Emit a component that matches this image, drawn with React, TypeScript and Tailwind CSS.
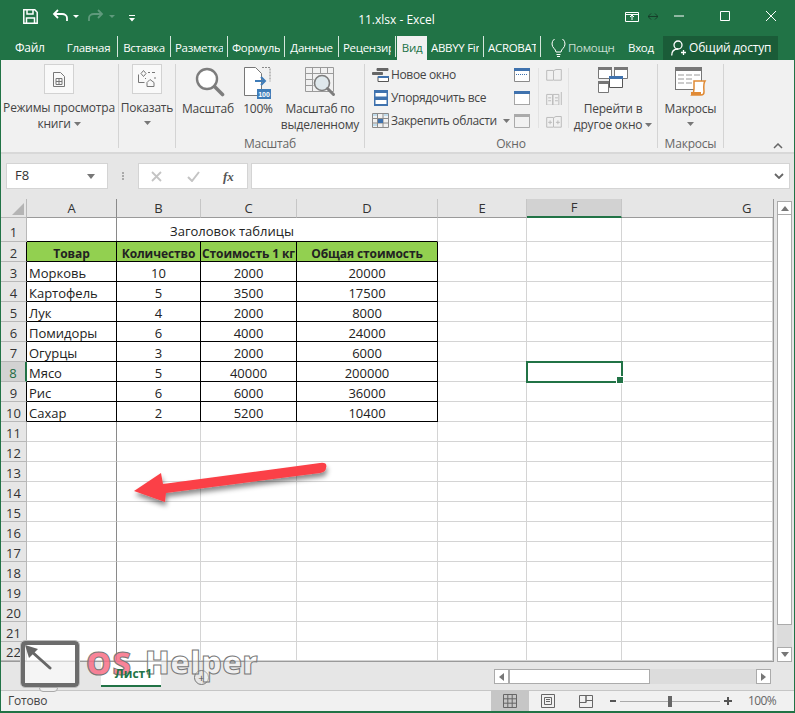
import type { ReactNode } from 'react'

const UI_FONT = "font-['Open_Sans','Noto_Sans',sans-serif]"

const COLS = ['A', 'B', 'C', 'D', 'E', 'F', 'G']
const ROWS: [string, string, string, string][] = [
  ['Морковь', '10', '2000', '20000'],
  ['Картофель', '5', '3500', '17500'],
  ['Лук', '4', '2000', '8000'],
  ['Помидоры', '6', '4000', '24000'],
  ['Огурцы', '3', '2000', '6000'],
  ['Мясо', '5', '40000', '200000'],
  ['Рис', '6', '6000', '36000'],
  ['Сахар', '2', '5200', '10400'],
]

function Tab({ label, w }: { label: string; w: string }) {
  return (
    <div className={`${w} h-[21px] px-1 border-r border-[#d5e6dc]`}>
      <div className="overflow-hidden whitespace-nowrap text-center leading-[24px]">{label}</div>
    </div>
  )
}

function Caret({ className = '' }: { className?: string }) {
  return (
    <svg width="7" height="4" viewBox="0 0 7 4" className={`inline-block ${className}`}>
      <path d="M0 0h7L3.500 4z" fill="#777" />
    </svg>
  )
}

function BigLabel({ children, className = '' }: { children: ReactNode; className?: string }) {
  return <div className={`text-center text-[12px] leading-[16px] tracking-[-0.2px] text-[#444] ${className}`}>{children}</div>
}

function GroupTitle({ children }: { children: ReactNode }) {
  return <div className="absolute -bottom-1 left-0 right-0 text-center text-[12px] leading-[16px] tracking-[-0.2px] text-[#666]">{children}</div>
}

function ViewBox({ children }: { children: ReactNode }) {
  return <div className="w-[30px] h-[30px] bg-[#f9f9f9] border border-[#d2d2d2] flex items-center justify-center">{children}</div>
}

function WindowRow({ icon, label, caret }: { icon: ReactNode; label: string; caret?: boolean }) {
  return (
    <div className="flex items-center h-[23px] text-[12px] tracking-[-0.35px] whitespace-nowrap text-[#444]">
      <span className="w-[17px] flex justify-center">{icon}</span>
      <span className="ml-0.5">{label}</span>
      {caret && <Caret className="ml-1.5" />}
    </div>
  )
}

function Ribbon() {
  return (
    <div className="h-[94px] bg-[#f1f1f1] flex border-b-2 border-[#d8d8d8] relative">
      <div className="w-[118px] h-[84px] mt-1 pr-px border-r border-[#d4d4d4] flex flex-col items-center">
        <ViewBox>
          <svg width="12" height="15" viewBox="0 0 12 15" fill="none" stroke="#777">
            <path d="M.5.5h7l4 4v10H.5z" />
            <path d="M3 6.500h6v6H3zM6 6.500v6M3 9.500h6" />
          </svg>
        </ViewBox>
        <BigLabel className="mt-[6px] whitespace-nowrap">Режимы просмотра</BigLabel>
        <BigLabel>книги <Caret className="mb-0.5" /></BigLabel>
      </div>
      <div className="w-[57px] h-[84px] mt-1 border-r border-[#d4d4d4] flex flex-col items-center">
        <ViewBox>
          <svg width="18" height="18" viewBox="0 0 18 18" fill="none" stroke="#777">
            <path d="M.5 4.500v8h6M3 3.500 5.500.5 8 3.500 5.500 6.500zM10 2.500h2M14 2.500h3M12 9.500l-3 3v4h7v-4z" />
            <path d="M7 8.500h1M17 7v2" />
          </svg>
        </ViewBox>
        <BigLabel className="mt-[6px]">Показать</BigLabel>
        <Caret className="mt-[5px]" />
      </div>
      <div className="w-[189px] h-[84px] mt-1 border-r border-[#d4d4d4] relative flex">
        <div className="w-[64px] flex flex-col items-center">
          <svg width="30" height="30" viewBox="0 0 30 30" fill="none" className="mt-[3px] ml-1">
            <circle cx="12" cy="12" r="10" stroke="#7d7d7d" strokeWidth="2.400" fill="#fff" />
            <path d="m19.500 19.500 8 8" stroke="#7d7d7d" strokeWidth="3.600" strokeLinecap="round" />
          </svg>
          <BigLabel className="mt-[4px]">Масштаб</BigLabel>
        </div>
        <div className="w-[36px] flex flex-col items-center">
          <svg width="28" height="32" viewBox="0 0 28 32" fill="none" className="mt-[3px] shrink-0">
            <path d="M.5.5h11l6 6v22H.5z" fill="#fff" stroke="#777" />
            <path d="M18 .5h8v14" stroke="#888" strokeDasharray="2 1" />
            <path d="M11 14h10M17 10l4 4-4 4" stroke="#3f7cb8" strokeWidth="2" />
            <rect x="13" y="22" width="14" height="10" fill="#3f7cb8" />
            <text x="20" y="30" textAnchor="middle" fontSize="7" fill="#fff" fontFamily="Liberation Sans" fontWeight="700">100</text>
          </svg>
          <BigLabel className="mt-[2px]">100%</BigLabel>
        </div>
        <div className="flex-1 flex flex-col items-center">
          <svg width="31" height="30" viewBox="0 0 31 30" fill="none" className="mt-[3px]" stroke="#9a9a9a">
            <path d="M.5.500h28v24H.5zM.5 6.500h28M.5 12.500h8M.5 18.500h8M7.500.5v24M15.500.5v6M22.500.5v6" />
            <circle cx="17" cy="16" r="7.500" fill="#dfe8ec" stroke="#7d7d7d" strokeWidth="1.600" />
            <path d="m22.500 21.500 6 6" stroke="#7d7d7d" strokeWidth="3" strokeLinecap="round" />
          </svg>
          <BigLabel className="mt-[4px]">Масштаб по</BigLabel>
          <BigLabel>выделенному</BigLabel>
        </div>
        <GroupTitle>Масштаб</GroupTitle>
      </div>
      <div className="w-[293px] h-[84px] mt-1 border-r border-[#d4d4d4] relative flex">
        <div className="w-[149px] pl-[7px] -mt-px">
          <WindowRow
            label="Новое окно"
            icon={
              <svg width="17" height="14" viewBox="0 0 17 14" fill="none">
                <path d="M5 .5h11v2H5z" fill="#666" stroke="#666" />
                <path d="M.5 4.500h10v2H.5z" fill="#666" stroke="#666" />
                <path d="M6 8.500h10.500v5H6z" fill="#fff" stroke="#555" />
                <path d="M6 8h11v2H6z" fill="#3f72ae" />
              </svg>
            }
          />
          <WindowRow
            label="Упорядочить все"
            icon={
              <svg width="14" height="16" viewBox="0 0 14 16" fill="none">
                <rect x="0" y="0" width="14" height="16" fill="#3f72ae" />
                <rect x="1.500" y="3" width="11" height="3.500" fill="#fff" />
                <rect x="1.500" y="10" width="11" height="4" fill="#fff" />
              </svg>
            }
          />
          <WindowRow
            label="Закрепить области"
            caret
            icon={
              <svg width="17" height="15" viewBox="0 0 17 15" fill="none" stroke="#8a8a8a">
                <path d="M.5.5h16v14H.5zM.5 5.500h16M.5 10h16M5.500.5v14M11 .5v14" />
                <rect x="6" y="6" width="5" height="4" fill="#3f72ae" stroke="none" />
                <path d="M1 2h4M12 2h4M1 12h4" stroke="#8cc4e4" />
              </svg>
            }
          />
        </div>
        <div className="w-[16px] mr-[8px] flex flex-col">
          <svg width="16" height="14" viewBox="0 0 16 14" className="mt-[4px]" fill="#fff" stroke="#8a8a8a">
            <path d="M.5.5h15v13H.5z" />
            <path d="M0 0h16v3H0z" fill="#3f72ae" stroke="none" />
            <path d="M2 6.500h12" strokeDasharray="1 1" stroke="#3f72ae" />
          </svg>
          <svg width="16" height="14" viewBox="0 0 16 14" className="mt-[9px]" fill="#fff" stroke="#555" strokeDasharray="1 1">
            <path d="M.5.5h15v13H.5z" />
            <path d="M0 0h16v3H0z" fill="#3f72ae" stroke="none" />
          </svg>
          <svg width="16" height="14" viewBox="0 0 16 14" className="mt-[9px]" fill="none" stroke="#aaa">
            <path d="M.5.5h15v13H.5z" />
            <path d="M0 0h16v3H0z" fill="#aaa" stroke="none" />
          </svg>
        </div>
        <div className="w-[31px] h-[60px] mt-1 border-x border-[#e2e2e2] flex flex-col items-center gap-[11px] pt-px">
          <svg width="16" height="12" viewBox="0 0 16 12" fill="none" stroke="#bbb">
            <path d="M.5 1.500h7v10h-7zM8 1.500l2-1h5.500v11H8" />
          </svg>
          <svg width="16" height="14" viewBox="0 0 16 14" fill="none" stroke="#bbb">
            <path d="M.5 2.500h6v11h-6zM7 2.500h6v11H7zM15.500 0v14M2 6h3M2 9h3M9 6h3M9 9h3" />
          </svg>
          <svg width="16" height="12" viewBox="0 0 16 12" fill="none" stroke="#bbb">
            <path d="M.5 1.500h7v10h-7zM8 1.500l2-1h5.500v11H8M2 6.500h4M4 4.500v4M10 6.500h4M12 4.500v4" />
          </svg>
        </div>
        <div className="flex-1 flex flex-col items-center">
          <svg width="30" height="26" viewBox="0 0 30 26" className="mt-[3px]" fill="#fff" stroke="#777">
            <path d="M.5.500h13v11H.5zM16.500.5h13v11h-13zM.5 14.500h10v11H.5z" />
            <path d="M0 0h14v3H0zM16 0h14v3H16zM0 14h11v3H0z" fill="#777" stroke="none" />
            <path d="M11.500 9.500h13v11h-13z" stroke="#555" />
            <path d="M11 9h14v3H11z" fill="#3f72ae" stroke="none" />
          </svg>
          <BigLabel className="mt-[8px]">Перейти в</BigLabel>
          <BigLabel className="whitespace-nowrap">другое окно <Caret className="mb-0.5" /></BigLabel>
        </div>
        <GroupTitle>Окно</GroupTitle>
      </div>
      <div className="w-[66px] h-[84px] mt-1 border-r border-[#d4d4d4] relative flex flex-col items-center">
        <svg width="32" height="30" viewBox="0 0 32 30" className="mt-[3px]" fill="none">
          <rect x=".5" y=".5" width="26" height="22" fill="#fff" stroke="#777" />
          <rect x="0" y="0" width="27" height="4" fill="#777" />
          <path d="M3 8h6M11 8h6M19 8h6M3 12h6M11 12h6M3 16h6M11 16h6" stroke="#999" />
          <path d="M19 14h11c-2 3-1 8-1 11 0 2-1 3-3 3h-9c2-2 2-4 2-6z" fill="#fff" stroke="#e08a35" strokeWidth="1.500" />
          <path d="M16 25h10v3H16z" fill="#e08a35" />
        </svg>
        <BigLabel className="mt-[4px]">Макросы</BigLabel>
        <Caret className="mt-[5px]" />
        <GroupTitle>Макросы</GroupTitle>
      </div>
      <svg width="10" height="6" viewBox="0 0 10 6" fill="none" className="absolute right-[11px] bottom-[3px]">
        <path d="m1 5 4-4 4 4" stroke="#666" strokeWidth="1.500" />
      </svg>
    </div>
  )
}

function FormulaBar() {
  return (
    <div className="h-[45px] flex items-start pt-[9px] pl-[5px] pr-[4px]">
      <div className="w-[102px] h-[26px] bg-white border border-[#d4d4d4] flex items-center justify-between pl-2 pr-3 text-[13px] text-[#333]">
        F8
        <svg width="8" height="5" viewBox="0 0 8 5"><path d="M0 0h8L4 5z" fill="#777" /></svg>
      </div>
      <div className="w-[30px] h-[26px] flex flex-col items-center justify-center gap-px">
        <i className="w-[2px] h-[2px] bg-[#aaa]" />
        <i className="w-[2px] h-[2px] bg-[#aaa]" />
        <i className="w-[2px] h-[2px] bg-[#aaa]" />
      </div>
      <div className="w-[110px] h-[26px] bg-white border border-[#d4d4d4] flex items-center pl-[12px]">
        <svg width="11" height="11" viewBox="0 0 11 11"><path d="m1 1 9 9M10 1l-9 9" stroke="#c4c4c4" strokeWidth="1.800" /></svg>
        <svg width="13" height="11" viewBox="0 0 13 11" className="ml-[25px]"><path d="m1 6 4 4 7-9" stroke="#c4c4c4" strokeWidth="2" fill="none" /></svg>
        <span className="ml-[23px] font-['Liberation_Serif',serif] italic font-bold text-[13px] leading-none text-[#555]">fx</span>
      </div>
      <div className="w-[3px]" />
      <div className="flex-1 h-[26px] bg-white border border-[#d4d4d4] flex items-center justify-end pr-[5px]">
        <svg width="10" height="6" viewBox="0 0 10 6" fill="none"><path d="m1 1 4 4 4-4" stroke="#666" strokeWidth="1.800" /></svg>
      </div>
    </div>
  )
}

function Sheet() {
  const grid = 'border-r border-b border-[#d4d4d4] bg-white'
  const boxed = 'border-r border-b border-black'
  const emptyRows = Array.from({ length: 12 }, (_, i) => i + 11)
  const rowHead = (n: number) => {
    const inTable = n >= 2 && n <= 10
    return (
      <div
        key={`h${n}`}
        className={`flex items-center justify-center ${n === 1 ? 'pt-[5px]' : 'pt-[3px]'} text-[13px] border-b border-b-[#b8b8b8] ${n === 8 ? 'bg-[#d2d2d2] text-[#1d6b42] border-r-2 border-r-[#217346]' : `bg-[#e6e6e6] text-[#333] border-r ${inTable ? 'border-r-black' : 'border-r-[#b8b8b8]'}`}`}
      >
        {n}
      </div>
    )
  }
  return (
    <div className="flex-1 flex min-h-0">
      <div className="w-[773px] grid grid-cols-[26px_90px_84px_96px_141px_89px_95px_151px] grid-rows-[19px_24px_repeat(20,20px)_19px] border-b border-[#9a9a9a] border-r text-[13px] text-[#222] leading-none">
        <div className="bg-[#e6e6e6] border-r border-b border-[#b8b8b8] relative overflow-hidden">
          <i className="absolute right-[2px] bottom-[2px] w-0 h-0 border-l-[12px] border-l-transparent border-b-[12px] border-b-[#b4b4b4]" />
        </div>
        {COLS.map(c => (
          <div
            key={c}
            className={`flex items-center text-[#333] border-b ${c === 'G' ? 'pl-[120px] border-b-[#9a9a9a] bg-[#e6e6e6]' : 'justify-center border-r'} ${c === 'F' ? 'bg-[#d2d2d2] text-[#1d6b42] border-b-2 border-b-[#217346] border-r-[#c6c6c6]' : ''} ${c !== 'F' && c !== 'G' ? 'bg-[#e6e6e6] border-b-[#9a9a9a]' : ''} ${c === 'A' ? 'border-r-[#8a8a8a]' : 'border-r-[#c6c6c6]'}`}
          >
            {c}
          </div>
        ))}

        {rowHead(1)}
        <div className="col-span-4 relative bg-white flex items-center justify-center pt-[3px] border-b border-r border-b-black border-r-[#d4d4d4]">
          Заголовок таблицы
          <i className="absolute left-[89px] top-0 bottom-0 w-px bg-[#8a8a8a]" />
        </div>
        <div className={grid} />
        <div className={grid} />
        <div className={grid} />

        {rowHead(2)}
        {['Товар', 'Количество', 'Стоимость 1 кг', 'Общая стоимость'].map(t => (
          <div key={t} className={`bg-[#92d050] font-bold flex items-center justify-center pt-1 whitespace-nowrap overflow-hidden text-[12px] tracking-[-0.1px] ${boxed}`}>
            {t}
          </div>
        ))}
        <div className={grid} />
        <div className={grid} />
        <div className={grid} />

        {ROWS.map((r, i) => {
          const n = i + 3
          return [
            rowHead(n),
            <div key={`a${n}`} className={`${boxed} pt-[3px] bg-white flex items-center pl-0.5`}>{r[0]}</div>,
            <div key={`b${n}`} className={`${boxed} pt-[3px] bg-white flex items-center justify-center`}>{r[1]}</div>,
            <div key={`c${n}`} className={`${boxed} pt-[3px] bg-white flex items-center justify-center`}>{r[2]}</div>,
            <div key={`d${n}`} className={`${boxed} pt-[3px] bg-white flex items-center justify-center`}>{r[3]}</div>,
            <div key={`e${n}`} className={grid} />,
            <div key={`f${n}`} className={`${grid} relative`}>
              {n === 8 && (
                <div className="absolute -left-px -top-px w-[97px] h-[22px] border-2 border-[#217346] z-10">
                  <i className="absolute -right-[3px] -bottom-[3px] w-[6px] h-[6px] bg-[#217346] border border-white box-content" />
                </div>
              )}
            </div>,
            <div key={`g${n}`} className={grid} />,
          ]
        })}

        {emptyRows.map(n => [
          rowHead(n),
          <div key={`a${n}`} className="bg-white border-b border-b-[#d4d4d4] border-r border-r-[#8a8a8a]" />,
          ...['b', 'c', 'd', 'e', 'f', 'g'].map(k => <div key={`${k}${n}`} className={grid} />),
        ])}
      </div>
      <div className="w-[15px] ml-[3px] pt-[2px] flex flex-col">
        <div className="h-[14px] bg-white border border-[#ababab] flex items-center justify-center">
          <svg width="8" height="5" viewBox="0 0 8 5"><path d="M4 0l4 5H0z" fill="#777" /></svg>
        </div>
        <div className="h-[410px] bg-white border-x border-b border-[#ababab]" />
        <div className="flex-1 bg-[#dcdcdc]" />
        <div className="h-[15px] bg-white border border-[#ababab] flex items-center justify-center">
          <svg width="8" height="5" viewBox="0 0 8 5"><path d="M0 0h8L4 5z" fill="#777" /></svg>
        </div>
      </div>
    </div>
  )
}

function SheetTabs() {
  return (
    <div className="h-[28px] flex pl-[100px] relative">
      <div className="w-[60px] h-[25px] bg-white border-b-2 border-[#217346] text-[#217346] font-bold text-[12px] flex items-center justify-center pl-[5px]">
        {/* stays readable through the watermark, as in the picture */}
        <span className="relative z-30">Лист1</span>
      </div>
      <div className="ml-[33px] mt-[8px] w-[15px] h-[15px] rounded-full border border-[#777] flex items-center justify-center text-[11px] leading-none text-[#555]">+</div>
      <div className="absolute left-[493px] top-[7px] w-[277px] h-[15px] flex bg-[#dcdcdc]">
        <div className="w-[15px] bg-white border border-[#ababab] flex items-center justify-center">
          <svg width="5" height="8" viewBox="0 0 5 8"><path d="M5 0v8L0 4z" fill="#777" /></svg>
        </div>
        <div className="w-[141px] bg-white border border-[#ababab]" />
        <div className="flex-1" />
        <div className="w-[15px] bg-white border border-[#ababab] flex items-center justify-center">
          <svg width="5" height="8" viewBox="0 0 5 8"><path d="M0 0v8l5-4z" fill="#777" /></svg>
        </div>
      </div>
    </div>
  )
}

function StatusBar() {
  return (
    <div className="h-[21px] bg-[#f1f1f1] border-t border-[#c6c6c6] flex items-center text-[12px] tracking-[-0.2px] text-[#444] pl-[7px]">
      <span>Готово</span>
      <div className="ml-auto flex items-center h-full">
        <div className="w-[38px] h-full bg-[#c6c6c6] flex items-center justify-center">
          <svg width="14" height="14" viewBox="0 0 14 14" fill="none" stroke="#666">
            <path d="M.5.5h13v13H.5zM.5 4.800h13M.5 9.200h13M4.800.5v13M9.200.5v13" />
          </svg>
        </div>
        <svg width="14" height="14" viewBox="0 0 14 14" fill="none" stroke="#666" className="ml-[12px]">
          <path d="M.5.5h13v13H.5zM3.500 3.500h7v7h-7zM5 5.500h4M5 7.500h4" />
        </svg>
        <svg width="14" height="13" viewBox="0 0 14 13" fill="none" stroke="#666" className="ml-[24px]">
          <path d="M.5.5h13v12H.5zM.5 7.500h6.500V.5M7 .5v7M7 5.500h6.500" />
        </svg>
        <span className="ml-[17px] w-[6px] h-[2px] bg-[#555]" />
        <div className="ml-[4px] w-[100px] h-px bg-[#aaa] relative">
          <i className="absolute left-[48px] -top-[5px] w-[4px] h-[11px] bg-[#666]" />
        </div>
        <svg width="8" height="8" viewBox="0 0 8 8" className="ml-[4px]"><path d="M0 4h8M4 0v8" stroke="#555" strokeWidth="2" /></svg>
        <span className="ml-[16px] mr-[19px] w-[27px] whitespace-nowrap tracking-[-0.6px] text-[#666]">100%</span>
      </div>
    </div>
  )
}

// watermark and arrow sit on top of the sheet in the picture
function Overlays() {
  return (
    <>
      <svg width="200" height="50" viewBox="0 0 200 50" className="absolute left-[130px] top-[458px] z-20 overflow-visible">
        <defs>
          <filter id="arrowShadow" x="-10%" y="-30%" width="120%" height="180%">
            <feDropShadow dx="1" dy="4" stdDeviation="2.500" floodColor="#000" floodOpacity="0.45" />
          </filter>
        </defs>
        <path
          d="M4 33 L31 15 L33 26 L190 5 Q198 4 196 10 Q196 14 190 15 L36 35 L35 44 Z"
          fill="#fb4046"
          filter="url(#arrowShadow)"
        />
      </svg>
      <div className="absolute left-[21px] top-[641px] z-20 w-[58px] h-[46px] rounded-[4px] border-[4px] border-[#6c6c6c] outline outline-1 outline-[#bdbdbd] bg-white/60">
        <svg width="28" height="28" viewBox="0 0 28 28" className="absolute -left-px -top-px">
          <path d="M26 24 7 7" stroke="#666" strokeWidth="3" strokeLinecap="round" />
          <path d="M1 1 14 5 5 14z" fill="#666" />
        </svg>
      </div>
      <div className="absolute left-[39px] top-[687px] z-20 w-[19px] h-[5px] rounded-b-sm bg-[#eee] border border-[#aaa]" />
      <div className="absolute left-[86px] top-[643px] z-20 font-['Open_Sans',sans-serif] font-extrabold text-[32px] leading-[40px] text-[#f96e86]/85 [-webkit-text-stroke:1px_#777] tracking-[1px]">OS</div>
      <div className="absolute left-[145px] top-[642px] z-20 font-['Open_Sans',sans-serif] font-extrabold text-[32px] leading-[40px] text-white/40 [-webkit-text-stroke:1px_#777] tracking-[0.5px]">Helper</div>
    </>
  )
}

export default function App() {
  return (
    <div className={`w-[795px] h-[713px] bg-[#217346] px-px pb-[2px] flex flex-col relative overflow-hidden ${UI_FONT}`}>
      <div className="h-[36px] -mx-px flex items-start text-white relative">
        <svg width="15" height="15" viewBox="0 0 15 15" className="ml-[23px] mt-[9px]" fill="none" stroke="#fff" strokeWidth="1.500">
          <path d="M.8.8h11l2.400 2.400v11H.8z" />
          <path d="M4 1v4h6V1M3.500 14V9h8v5" />
        </svg>
        <svg width="16" height="13" viewBox="0 0 16 13" fill="none" stroke="#fff" strokeWidth="1.800" className="ml-[14px] mt-[9px]">
          <path d="M6 1 2 5l4 4M2 5h8c3 0 5 2 5 4v3" />
        </svg>
        <svg width="6" height="3" viewBox="0 0 6 3" className="ml-[5px] mt-[15px]"><path d="M0 0h6L3 3z" fill="#fff" /></svg>
        <svg width="16" height="13" viewBox="0 0 16 13" fill="none" stroke="#5f9a7c" strokeWidth="1.800" className="ml-[9px] mt-[9px]">
          <path d="m10 1 4 4-4 4M14 5H6C3 5 1 7 1 9v3" />
        </svg>
        <svg width="6" height="3" viewBox="0 0 6 3" className="ml-[5px] mt-[15px]"><path d="M0 0h6L3 3z" fill="#5f9a7c" /></svg>
        <svg width="6" height="7" viewBox="0 0 6 7" className="ml-[14px] mt-[15px]"><path d="M0 0h6v1H0zM0 3h6L3 6.500z" fill="#fff" /></svg>
        <div className="absolute left-0 right-[2px] top-[11px] text-center text-[12px] leading-[18px] text-white">11.xlsx - Excel</div>
        <div className="ml-auto flex items-start">
          <svg width="14" height="11" viewBox="0 0 14 11" fill="none" stroke="#fff" className="mt-[11px]">
            <path d="M.5 1.500h13v9H.5zM7 9V4M5 6l2-2 2 2M1 3.500h12" />
          </svg>
          <svg width="10" height="7" viewBox="0 0 10 7" fill="none" stroke="#173f2a" className="ml-[9px] mt-[13px]">
            <path d="M0 3.500h10M3 .5l-3 3 3 3M7 .5l3 3-3 3" />
          </svg>
          <svg width="10" height="10" viewBox="0 0 10 10" className="ml-[16px] mt-[11px]"><path d="M0 5h10" stroke="#fff" /></svg>
          <svg width="10" height="10" viewBox="0 0 10 10" fill="none" className="ml-[36px] mt-[11px]"><path d="M.5.5h9v9h-9z" stroke="#fff" /></svg>
          <svg width="10" height="10" viewBox="0 0 10 10" className="ml-[36px] mr-[19px] mt-[11px]"><path d="m0 0 10 10M10 0 0 10" stroke="#fff" /></svg>
        </div>
      </div>

      <div className="h-[24px] -mx-px flex items-start text-white text-[11.500px] tracking-[-0.3px] relative">
        <div className="w-[60px] pl-[15px] text-[12px] leading-[24px]">Файл</div>
        <Tab label="Главная" w="w-[58px]" />
        <Tab label="Вставка" w="w-[53px]" />
        <Tab label="Разметка страницы" w="w-[57px]" />
        <Tab label="Формулы" w="w-[57px]" />
        <Tab label="Данные" w="w-[54px]" />
        <Tab label="Рецензирование" w="w-[57px]" />
        <div className="ml-[1px] w-[30px] h-[24px] bg-[#f1f1f1] text-[#217346] text-center leading-[24px]">Вид</div>
        <Tab label="ABBYY FineReader" w="w-[57px]" />
        <Tab label="ACROBAT" w="w-[57px]" />
        <svg width="15" height="18" viewBox="0 0 15 18" fill="none" stroke="#fff" className="ml-[10px] mt-[3px]">
          <path d="M5 13c0-3-4-4-4-8a6.500 6.500 0 0 1 13 0c0 4-4 5-4 8zM5.500 15.500h4M6 17.500h3" />
        </svg>
        <div className="ml-[2px] w-[47px] overflow-hidden whitespace-nowrap leading-[24px] text-[#c9dfd3]">Помощник</div>
        <div className="ml-[13px] w-[25px] whitespace-nowrap leading-[24px]">Вход</div>
        <div className="ml-[10px] w-[115px] h-[24px] bg-[#1a5c38] flex items-center pl-[8px] text-[12px] tracking-[-0.2px] whitespace-nowrap">
          <svg width="15" height="16" viewBox="0 0 15 16" fill="none" stroke="#fff" strokeWidth="1.300">
            <circle cx="7" cy="5" r="4" />
            <path d="M.7 15.500c0-4 2.500-6.500 6.300-6.500M10 12.500h5M12.500 10v5" />
          </svg>
          <span className="ml-[3px]">Общий доступ</span>
        </div>
      </div>

      <div className="flex-1 bg-[#e6e6e6] flex flex-col min-h-0">
        <Ribbon />
        <FormulaBar />
        <Sheet />
        <SheetTabs />
        <StatusBar />
      </div>
      <Overlays />
    </div>
  )
}
